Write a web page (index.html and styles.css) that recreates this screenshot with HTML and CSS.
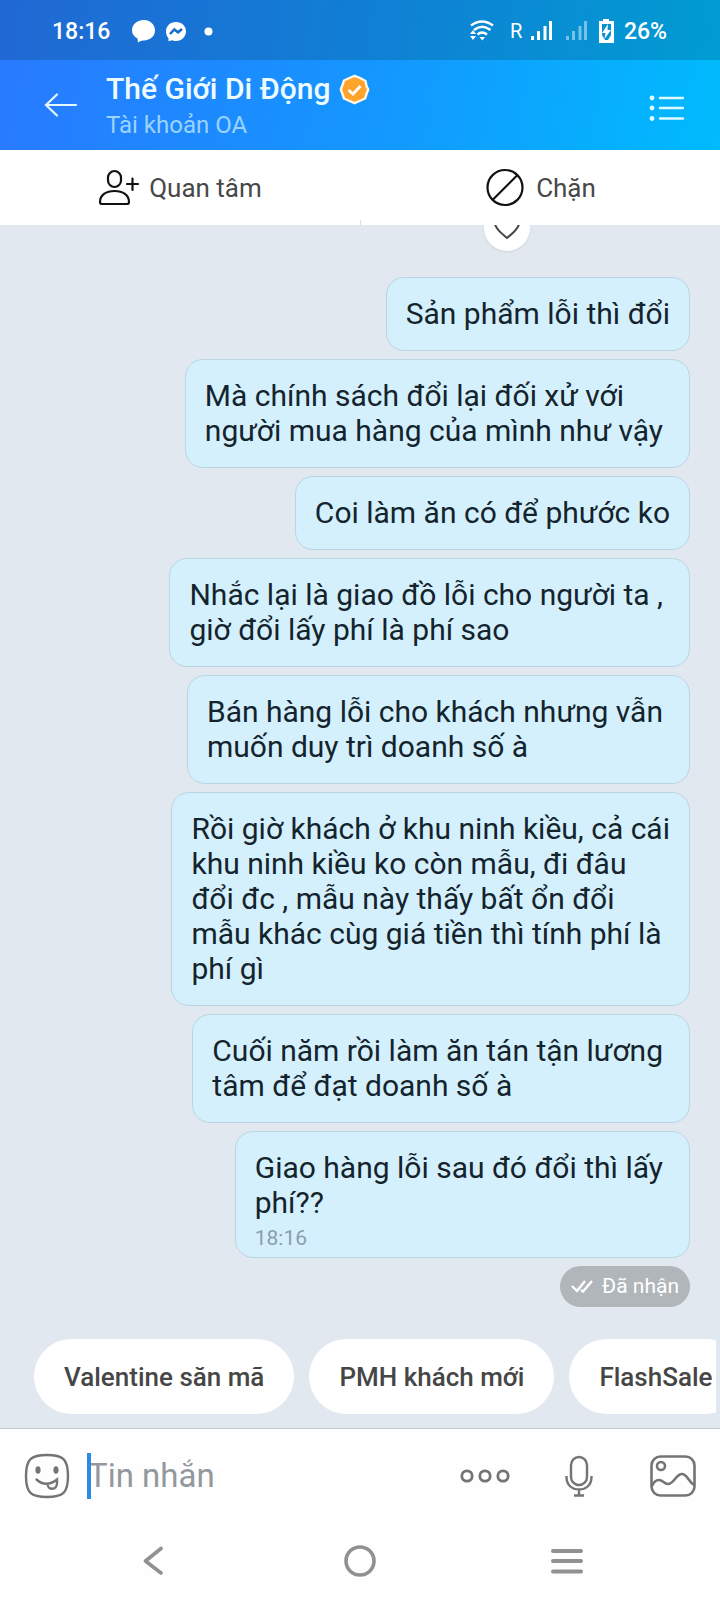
FILE: index.html
```html
<!DOCTYPE html>
<html lang="vi">
<head>
<meta charset="utf-8">
<meta name="viewport" content="width=device-width, initial-scale=1">
<title>Thế Giới Di Động</title>
<link rel="stylesheet" href="styles.css">
</head>
<body>
<div class="top">
  <div class="status">
    <span class="status-text">18:16</span>
    <svg class="notices" width="82" height="26" viewBox="0 0 82 26" fill="#fff">
      <path d="M12 1C18 1 23 5.500 23 11.500C23 17.500 18 21 12 21.500C10 21.500 8 22 6 23.500L5.500 19.500C2 17.500 0 15 0 11.500C0 5.500 5 1 12 1Z"/>
      <path d="M44 3C50 3 54 7.300 54 12.300C54 17.500 50 22 44 22C42.500 22 41 21.700 40 21.200L36.500 22.300V19.200C34.800 17.500 34 15 34 12.300C34 7.300 38 3 44 3Z"/>
      <path d="M38 15L42.300 10.500L46 13.300L50 10" fill="none" stroke="#1a6cca" stroke-width="2.500"/>
      <circle cx="76.500" cy="12.500" r="4"/>
    </svg>
    <svg class="signals" width="146" height="26" viewBox="0 0 146 26" fill="#fff">
      <g fill="none" stroke="#fff" stroke-width="2.400">
        <path d="M1 6.500Q12 -1.500 23 6.500"/><path d="M4 11Q12 4.500 20.500 11"/><path d="M7.500 15.500Q12 11.500 17 15.500"/>
      </g>
      <path d="M0 15L3 11L6 15ZM0 17L3 21L6 17ZM9.500 18H15L12.300 21.500Z"/>
      <path d="M61 17h3v4h-3zM67 12h3v9h-3zM73.500 7h3v14h-3zM79 2h3v19h-3z"/>
      <path opacity=".45" d="M96 17h3v4h-3zM102 12h3v9h-3zM108.500 7h3v14h-3zM114 2h3v19h-3z"/>
      <path fill-rule="evenodd" d="M133 0h6v2h5v22h-15V2h4zM132 5v11l3 5h3l3-5V5z"/>
      <path d="M138 5L132 14H135.500L134.500 20L141 11H137.500Z"/>
      <text class="roam" x="40" y="19">R</text>
    </svg>
    <span class="status-text">26%</span>
  </div>
  <header class="header">
    <button class="icon-btn" aria-label="Quay lại"><svg width="34" height="26" viewBox="0 0 34 26" fill="none" stroke="#e5f7ff" stroke-width="2.200" stroke-linecap="round"><path d="M32 13H2M13 2.500L2 13L13 23.500"/></svg></button>
    <div class="who">
      <h1 class="name">Thế Giới Di Động
        <svg width="31" height="31" viewBox="0 0 31 31"><path d="M15.500 1.800L21 4L26.500 7L27.500 12L29.200 15.500L27.500 20L26 24.500L20.500 27L15.500 29.200L10.500 27L5 24.500L3.500 20L1.800 15.500L3.500 11L5 6.500L10.500 4Z" fill="#fea32c" stroke="#fff6e4" stroke-width="2.400" stroke-linejoin="round"/><path d="M9.500 16L14 20L21.500 12" fill="none" stroke="#fff" stroke-width="2.800"/></svg>
      </h1>
      <p class="sub">Tài khoản OA</p>
    </div>
    <button class="icon-btn menu" aria-label="Tùy chọn"><svg width="36" height="28" viewBox="0 0 36 28" fill="#e0f9ff"><circle cx="3" cy="4" r="2.400"/><circle cx="3" cy="14" r="2.400"/><circle cx="3" cy="24.500" r="2.400"/><path d="M11 4H34M11 14H34M11 24.500H34" stroke="#e0f9ff" stroke-width="2.400" stroke-linecap="round"/></svg></button>
  </header>
</div>

<div class="actions">
  <button class="action"><svg width="42" height="38" viewBox="0 0 42 38" fill="none" stroke="#111" stroke-width="2.200" stroke-linecap="round"><rect x="10" y="2" width="13" height="16" rx="6.500"/><path d="M2 33C2 26 8 22 16.500 22S31 26 31 33Q31 35 29 35H4Q2 35 2 33ZM29 15H40M34.500 9.500V21"/></svg>Quan tâm</button>
  <button class="action action-block"><svg width="40" height="40" viewBox="0 0 40 40" fill="none" stroke="#111" stroke-width="2.200"><circle cx="21" cy="19.500" r="17.500"/><path d="M8.500 32L33.500 7"/></svg>Chặn</button>
</div>

<main class="chat">
  <div class="reaction"><svg width="28" height="24" viewBox="0 0 28 24" fill="none" stroke="#444" stroke-width="2"><path d="M14 22C8 17 2 12 1.500 6C2 1 10 0 14 5C18 0 26 1 26.500 6C26 12 20 17 14 22Z"/></svg></div>
  <p class="bubble">Sản phẩm lỗi thì đổi</p>
  <p class="bubble wrapped">Mà chính sách đổi lại đối xử với<br>người mua hàng của mình như vậy</p>
  <p class="bubble">Coi làm ăn có để phước ko</p>
  <p class="bubble wrapped">Nhắc lại là giao đồ lỗi cho người ta ,<br>giờ đổi lấy phí là phí sao</p>
  <p class="bubble wrapped">Bán hàng lỗi cho khách nhưng vẫn<br>muốn duy trì doanh số à</p>
  <p class="bubble">Rồi giờ khách ở khu ninh kiều, cả cái<br>khu ninh kiều ko còn mẫu, đi đâu<br>đổi đc , mẫu này thấy bất ổn đổi<br>mẫu khác cùg giá tiền thì tính phí là<br>phí gì</p>
  <p class="bubble wrapped">Cuối năm rồi làm ăn tán tận lương<br>tâm để đạt doanh số à</p>
  <div class="bubble wrapped last">Giao hàng lỗi sau đó đổi thì lấy<br>phí??<time class="time">18:16</time></div>
  <div class="receipt"><svg width="22" height="14" viewBox="0 0 22 14" fill="none" stroke="#fff" stroke-width="2.400"><path d="M1 7L6 12L14 2M10 11L12 12.500L21 2"/></svg>Đã nhận</div>
  <div class="chips">
    <button class="chip">Valentine săn mã</button>
    <button class="chip">PMH khách mới</button>
    <button class="chip">FlashSale</button>
  </div>
</main>

<form class="composer">
  <button type="button" class="icon-btn" aria-label="Nhãn dán"><svg width="46" height="46" viewBox="0 0 46 46" fill="none" stroke="#747474" stroke-width="2.400"><path d="M23 2C39 2 44 6 44 23S39 44 23 44S2 40 2 23S7 2 23 2Z"/><ellipse cx="14" cy="17" rx="1.400" ry="2.600" fill="#747474"/><ellipse cx="32" cy="17" rx="1.400" ry="2.600" fill="#747474"/><path d="M12.500 26.500Q22 35 33 26.500V30C33 38 23.500 37 23.500 31" stroke-linecap="round"/></svg></button>
  <label class="field"><input class="input" type="text" placeholder="Tin nhắn" aria-label="Tin nhắn"></label>
  <button type="button" class="icon-btn" aria-label="Thêm"><svg width="50" height="14" viewBox="0 0 50 14" fill="none" stroke="#747474" stroke-width="2.800"><circle cx="7" cy="7" r="5.200"/><circle cx="25" cy="7" r="5.200"/><circle cx="43" cy="7" r="5.200"/></svg></button>
  <button type="button" class="icon-btn mic" aria-label="Ghi âm"><svg width="28" height="42" viewBox="0 0 28 42" fill="none" stroke="#747474" stroke-width="2.400"><rect x="6" y="2" width="16" height="28" rx="8"/><path d="M1.500 21V22C1.500 30 7 34.500 14 34.500S26.500 30 26.500 22V21M14 35V40M9 40.500H19"/></svg></button>
  <button type="button" class="icon-btn" aria-label="Ảnh"><svg width="46" height="42" viewBox="0 0 46 42" fill="none" stroke="#747474" stroke-width="2.600"><rect x="1.500" y="1.500" width="43" height="39" rx="9"/><circle cx="11" cy="11" r="4"/><path d="M2 31C4 26 7 25 9 25C13 25 14 29 18 29C24 29 26 19 32 19C37 19 39 27 44 30"/></svg></button>
</form>

<nav class="nav">
  <button class="icon-btn" aria-label="Trở về"><svg width="20" height="30" viewBox="0 0 20 30" fill="none" stroke="#919191" stroke-width="3.600" stroke-linecap="round" stroke-linejoin="round"><path d="M18 2.500L2.500 15L18 27"/></svg></button>
  <button class="icon-btn" aria-label="Màn hình chính"><svg width="32" height="32" viewBox="0 0 32 32" fill="none" stroke="#919191" stroke-width="3.600"><circle cx="16" cy="16" r="14"/></svg></button>
  <button class="icon-btn" aria-label="Ứng dụng gần đây"><svg width="34" height="28" viewBox="0 0 34 28" stroke="#919191" stroke-width="4" stroke-linecap="round"><path d="M3 4H31M3 14H31M3 24.500H31"/></svg></button>
</nav>
</body>
</html>
```
FILE: styles.css
```css
* { box-sizing: border-box; }
body {
  margin: 0;
  min-height: 100vh;
  display: flex;
  flex-direction: column;
  background: #fefefe;
  font-family: Roboto, "Noto Sans", sans-serif;
}
svg { display: block; flex: none; }
button { border: 0; background: none; padding: 0; font: inherit; }
h1, p { margin: 0; }
.icon-btn { display: flex; align-items: center; justify-content: center; }

.top { background: linear-gradient(100deg, #2979ff, #1595ff 50%, #00bbfd); }
.status {
  height: 60px;
  padding: 3px 53px 0 52px;
  display: flex;
  align-items: center;
  background: rgba(0, 40, 40, 0.2);
  color: #fff;
}
.status-text { font-size: 23px; font-weight: 500; line-height: 28px; }
.notices { margin-left: 22px; }
.signals { margin-left: auto; margin-right: 8px; }
.roam { font-size: 20px; }

.header {
  height: 90px;
  padding: 0 35px 0 44px;
  display: flex;
  align-items: center;
}
.who { flex: 1; padding: 4px 0 0 28px; }
.name {
  display: flex;
  align-items: center;
  gap: 9px;
  color: #effcff;
  font-size: 30px;
  font-weight: 500;
  line-height: 36px;
}
.sub { color: #9bd3ff; font-size: 24px; line-height: 36px; }
.menu { padding-top: 6px; }

.actions {
  height: 75px;
  display: flex;
  background: linear-gradient(#dcdcdc, #dcdcdc) center bottom / 1px 5px no-repeat #fff;
}
.action {
  flex: 1;
  display: flex;
  align-items: center;
  justify-content: center;
  gap: 9px;
  color: #484848;
  font-size: 26px;
}
.action-block { gap: 12px; }

.chat {
  flex: 1;
  position: relative;
  overflow: hidden;
  display: flex;
  flex-direction: column;
  align-items: flex-end;
  gap: 8px;
  padding: 52px 30px 14px;
  border-bottom: 1px solid #c0c7cf;
  background: #e2e8f0;
}
.reaction {
  position: absolute;
  top: -20px;
  right: 190px;
  width: 46px;
  height: 46px;
  display: flex;
  align-items: center;
  justify-content: center;
  border-radius: 50%;
  background: #fff;
  box-shadow: 0 1px 2px #cdd3da;
}
.bubble {
  padding: 18px 19px 19px;
  border: 1px solid #b9d5e2;
  border-radius: 18px;
  background: #d5f0fd;
  color: #14242d;
  font-size: 30px;
  line-height: 35px;
}
.wrapped { padding-right: 26px; }
.last { padding-bottom: 0; }
.time { display: block; color: #8a9fab; font-size: 21px; line-height: 37px; }
.receipt {
  display: flex;
  align-items: center;
  gap: 9px;
  height: 41px;
  padding: 0 11px 2px;
  border-radius: 21px;
  background: #b1b6bb;
  color: #fff;
  font-size: 21px;
}
.chips {
  align-self: stretch;
  display: flex;
  gap: 15px;
  margin: auto -26px 0 4px;
  overflow: hidden;
}
.chip {
  flex: none;
  height: 75px;
  padding: 0 30px;
  border-radius: 38px;
  background: #fff;
  color: #464646;
  font-size: 26px;
  font-weight: 500;
}

.composer {
  height: 95px;
  padding: 0 24px 2px;
  display: flex;
  align-items: center;
}
.field {
  flex: 1;
  min-width: 0;
  position: relative;
  margin-left: 17px;
}
.field::before {
  content: "";
  position: absolute;
  top: 0;
  left: 0;
  width: 4px;
  height: 46px;
  background: #2b8be0;
}
.input {
  display: block;
  width: 100%;
  height: 46px;
  padding: 0 0 0 1px;
  border: 0;
  outline: 0;
  background: none;
  font: 33px Roboto, "Noto Sans", sans-serif;
}
.input::placeholder { color: #92989d; opacity: 1; }
.mic { margin: 0 57px 0 55px; }

.nav {
  height: 76px;
  padding: 0 50px 2px;
  display: grid;
  grid-template-columns: repeat(3, 1fr);
}
```
